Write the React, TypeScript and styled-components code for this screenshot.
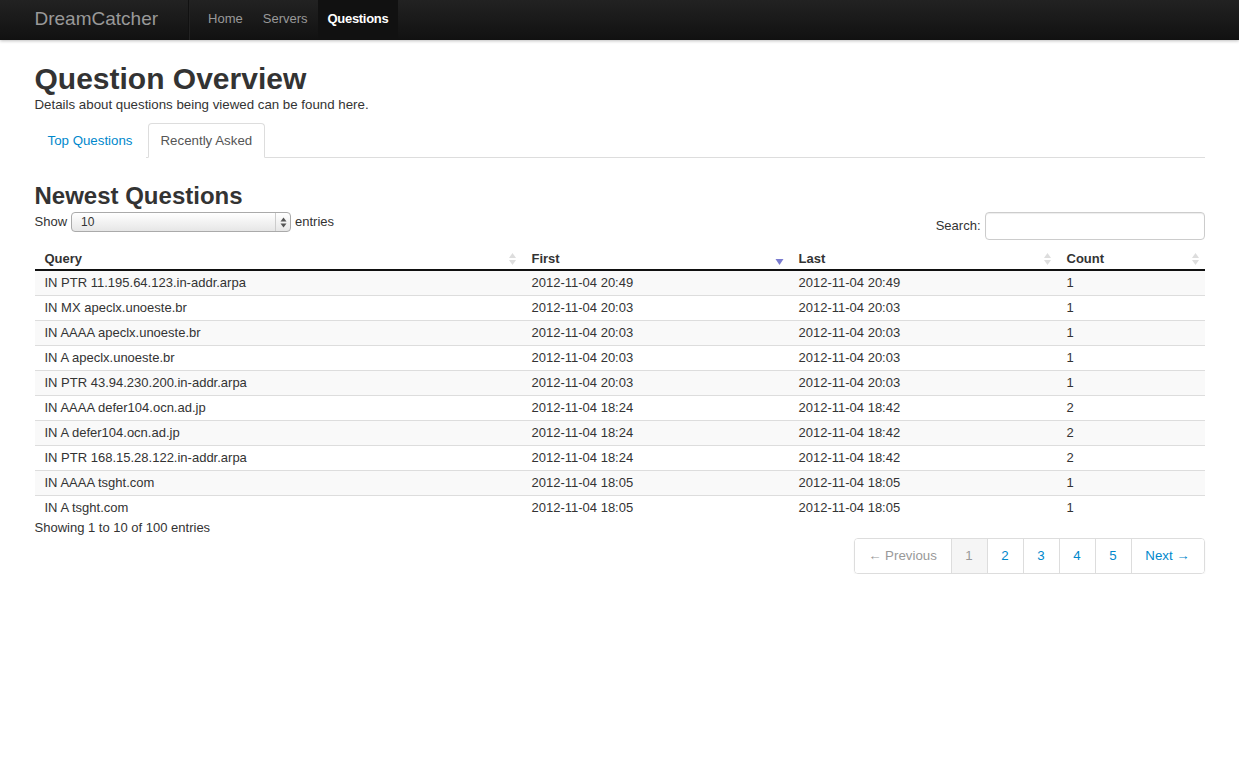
import { createGlobalStyle, styled } from 'styled-components';

const GlobalStyle = createGlobalStyle`
  html, body {
    margin: 0;
    padding: 0;
    background: #fff;
  }
  body {
    font-family: "Liberation Sans", Arial, sans-serif;
    font-size: 13px;
    line-height: 20px;
    color: #333;
  }
`;

const Navbar = styled.div`
  height: 40px;
  background: linear-gradient(to bottom, #222, #111);
  box-shadow: 0 1px 3px rgba(0, 0, 0, 0.25);
`;

const NavInner = styled.div`
  width: 1170px;
  margin: 0 auto;
  display: flex;
  align-items: stretch;
  height: 40px;
`;

const Brand = styled.a`
  font-size: 19px;
  line-height: 38px;
  color: #999;
  padding-right: 30px;
  border-right: 1px solid #111;
  box-shadow: 1px 0 0 #222;
  text-decoration: none;
`;

const NavList = styled.ul`
  display: flex;
  list-style: none;
  margin: 0 0 0 9px;
  padding: 0;
`;

const NavItem = styled.li<{ $active?: boolean }>`
  padding: 0 10px;
  line-height: 38px;
  font-size: 13px;
  color: ${(p) => (p.$active ? '#fff' : '#999')};
  background: ${(p) => (p.$active ? '#111' : 'transparent')};
  font-weight: ${(p) => (p.$active ? 'bold' : 'normal')};
  letter-spacing: ${(p) => (p.$active ? '-0.3px' : '0')};
`;

const Container = styled.div`
  width: 1170px;
  margin: 0 auto;
`;

const Title = styled.h1`
  font-size: 30px;
  line-height: 36px;
  font-weight: bold;
  margin: 21px 0 0;
  color: #333;
`;

const Lead = styled.p`
  margin: 0 0 10px;
  font-size: 13.3px;
  line-height: 16px;
`;

const Tabs = styled.ul`
  display: flex;
  list-style: none;
  margin: 0 0 24px;
  padding: 0;
  border-bottom: 1px solid #ddd;
`;

const Tab = styled.li<{ $active?: boolean }>`
  margin-bottom: -1px;
  margin-right: 2px;
  padding: 0 12px;
  line-height: 33px;
  font-size: 13.3px;
  color: ${(p) => (p.$active ? '#555' : '#0088cc')};
  border: 1px solid ${(p) => (p.$active ? '#ddd' : 'transparent')};
  border-bottom-color: ${(p) => (p.$active ? '#fff' : 'transparent')};
  border-radius: 4px 4px 0 0;
  background: #fff;
`;

const SubTitle = styled.h2`
  font-size: 24px;
  line-height: 28px;
  font-weight: bold;
  margin: 0;
  color: #333;
`;

const Controls = styled.div`
  display: flex;
  justify-content: space-between;
  align-items: flex-start;
  margin-top: 2px;
  height: 36px;
`;

const Label = styled.label`
  display: flex;
  align-items: center;
  gap: 4px;
  font-size: 13px;
`;

const Select = styled.div`
  width: 209px;
  height: 18px;
  border: 1px solid #aaa;
  border-radius: 4px;
  background: linear-gradient(to bottom, #fff, #e6e6e6);
  display: flex;
  align-items: center;
  justify-content: space-between;
  padding-left: 9px;
  box-sizing: content-box;
  font-size: 12px;
`;

const SelectArrows = styled.div`
  width: 14px;
  height: 18px;
  border-left: 1px solid #ccc;
  display: flex;
  align-items: center;
  justify-content: center;
`;

const SearchInput = styled.div`
  width: 218px;
  height: 26px;
  border: 1px solid #ccc;
  border-radius: 4px;
  box-shadow: inset 0 1px 1px rgba(0, 0, 0, 0.075);
  margin-left: 4px;
`;

const SearchLabel = styled(Label)`
  margin-top: 0;
  gap: 0;
`;

const Table = styled.table`
  width: 100%;
  border-collapse: collapse;
  table-layout: fixed;
  font-size: 13px;
`;

const Th = styled.th<{ $w: number }>`
  box-sizing: border-box;
  width: ${(p) => p.$w}px;
  text-align: left;
  font-weight: bold;
  padding: 0 10px;
  height: 22px;
  border-bottom: 2px solid #111;
  position: relative;
`;

const SortIcon = styled.span`
  position: absolute;
  right: 5px;
  top: 4px;
  display: flex;
`;

const Tr = styled.tr<{ $odd: boolean }>`
  background: ${(p) => (p.$odd ? '#f9f9f9' : '#fff')};
`;

const Td = styled.td`
  padding: 0 10px;
  height: 24px;
  border-top: 1px solid #ddd;
  line-height: 22px;
`;

const Info = styled.div`
  margin-top: -2px;
  font-size: 13px;
  line-height: 20px;
`;

const PagerRow = styled.div`
  display: flex;
  justify-content: flex-end;
  margin-top: 0;
`;

const Pager = styled.ul`
  display: flex;
  list-style: none;
  margin: 0;
  padding: 0;
  border: 1px solid #ddd;
  border-radius: 4px;
  box-shadow: 0 1px 2px rgba(0, 0, 0, 0.05);
  overflow: hidden;
`;

const PageItem = styled.li<{ $active?: boolean; $disabled?: boolean; $w: number }>`
  width: ${(p) => p.$w}px;
  height: 34px;
  line-height: 34px;
  text-align: center;
  font-size: 13.3px;
  border-left: 1px solid #ddd;
  &:first-child {
    border-left: none;
  }
  color: ${(p) => (p.$active || p.$disabled ? '#999' : '#0088cc')};
  background: ${(p) => (p.$active ? '#f5f5f5' : '#fff')};
`;

const Both = () => (
  <svg width="9" height="14" viewBox="0 0 9 14">
    <path d="M4.5 1 L8 6 L1 6 Z" fill="#ddd" />
    <path d="M4.5 13 L8 8 L1 8 Z" fill="#ddd" />
  </svg>
);

const Desc = () => (
  <svg width="9" height="14" viewBox="0 0 9 14">
    <path d="M4.5 13 L8.5 7 L0.5 7 Z" fill="#7a7ccf" />
  </svg>
);

const rows = [
  ['IN PTR 11.195.64.123.in-addr.arpa', '2012-11-04 20:49', '2012-11-04 20:49', '1'],
  ['IN MX apeclx.unoeste.br', '2012-11-04 20:03', '2012-11-04 20:03', '1'],
  ['IN AAAA apeclx.unoeste.br', '2012-11-04 20:03', '2012-11-04 20:03', '1'],
  ['IN A apeclx.unoeste.br', '2012-11-04 20:03', '2012-11-04 20:03', '1'],
  ['IN PTR 43.94.230.200.in-addr.arpa', '2012-11-04 20:03', '2012-11-04 20:03', '1'],
  ['IN AAAA defer104.ocn.ad.jp', '2012-11-04 18:24', '2012-11-04 18:42', '2'],
  ['IN A defer104.ocn.ad.jp', '2012-11-04 18:24', '2012-11-04 18:42', '2'],
  ['IN PTR 168.15.28.122.in-addr.arpa', '2012-11-04 18:24', '2012-11-04 18:42', '2'],
  ['IN AAAA tsght.com', '2012-11-04 18:05', '2012-11-04 18:05', '1'],
  ['IN A tsght.com', '2012-11-04 18:05', '2012-11-04 18:05', '1'],
];

const columns = [
  { name: 'Query', w: 487, desc: false },
  { name: 'First', w: 267, desc: true },
  { name: 'Last', w: 268, desc: false },
  { name: 'Count', w: 148, desc: false },
];

function App() {
  return (
    <>
      <GlobalStyle />
      <Navbar>
        <NavInner>
          <Brand>DreamCatcher</Brand>
          <NavList>
            <NavItem>Home</NavItem>
            <NavItem>Servers</NavItem>
            <NavItem $active>Questions</NavItem>
          </NavList>
        </NavInner>
      </Navbar>
      <Container>
        <Title>Question Overview</Title>
        <Lead>Details about questions being viewed can be found here.</Lead>
        <Tabs>
          <Tab>Top Questions</Tab>
          <Tab $active>Recently Asked</Tab>
        </Tabs>
        <SubTitle>Newest Questions</SubTitle>
        <Controls>
          <Label>
            Show
            <Select>
              10
              <SelectArrows>
                <svg width="7" height="11" viewBox="0 0 7 11">
                  <path d="M3.5 0.5 L6.5 4.5 L0.5 4.5 Z" fill="#555" />
                  <path d="M3.5 10.5 L6.5 6.5 L0.5 6.5 Z" fill="#555" />
                </svg>
              </SelectArrows>
            </Select>
            entries
          </Label>
          <SearchLabel>
            Search:
            <SearchInput />
          </SearchLabel>
        </Controls>
        <Table>
          <thead>
            <tr>
              {columns.map((c) => (
                <Th key={c.name} $w={c.w}>
                  {c.name}
                  <SortIcon>{c.desc ? <Desc /> : <Both />}</SortIcon>
                </Th>
              ))}
            </tr>
          </thead>
          <tbody>
            {rows.map((r, i) => (
              <Tr key={i} $odd={i % 2 === 0}>
                {r.map((cell, j) => (
                  <Td key={j}>{cell}</Td>
                ))}
              </Tr>
            ))}
          </tbody>
        </Table>
        <Info>Showing 1 to 10 of 100 entries</Info>
        <PagerRow>
          <Pager>
            <PageItem $w={96} $disabled>← Previous</PageItem>
            <PageItem $w={35} $active>1</PageItem>
            <PageItem $w={35}>2</PageItem>
            <PageItem $w={35}>3</PageItem>
            <PageItem $w={35}>4</PageItem>
            <PageItem $w={35}>5</PageItem>
            <PageItem $w={72}>Next →</PageItem>
          </Pager>
        </PagerRow>
      </Container>
    </>
  );
}

export default App;
